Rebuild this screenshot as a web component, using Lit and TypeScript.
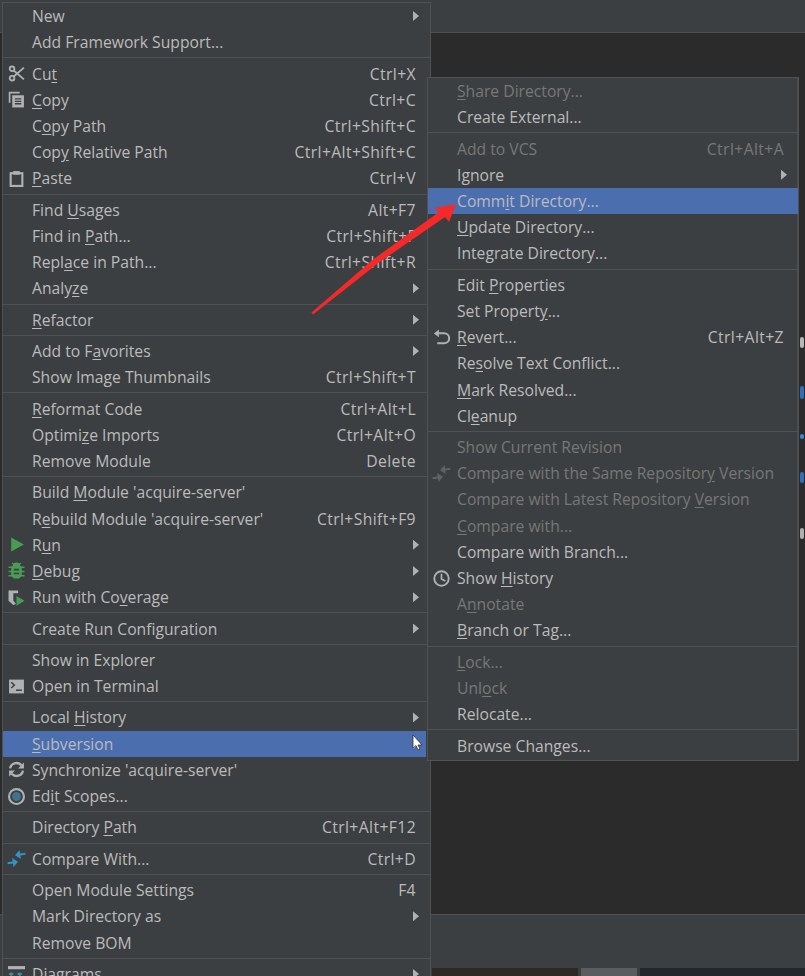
import { LitElement, html, css, svg, nothing } from "lit";
import { customElement } from "lit/decorators.js";

type Item = { t: string; s?: string; sub?: boolean; i?: string; dis?: boolean; sel?: boolean } | null;

const G = "#afb1b3";
const arrows = "M-1 10.3H4V7L9 11.3 4 15.6V12.3H-1zM17 3.7H12V.4L7 4.7 12 9V5.7H17z";
const icons: Record<string, unknown> = {
  cut: svg`<g fill="none" stroke="${G}" stroke-width="1.7"><circle cx="3.8" cy="3.6" r="2.2"/><circle cx="3.8" cy="12.4" r="2.2"/><path d="M5.4 5.2 15 13.5M5.4 10.8 15 2.5"/></g>`,
  copy: svg`<path d="M1.5 1v10M1 1.5h10" fill="none" stroke="${G}" stroke-width="1.6"/><rect x="4" y="4" width="11" height="11.5" fill="${G}"/><path d="M6.5 7.5h6M6.5 9.7h6M6.5 12h6" stroke="#3c3f41" stroke-width="1.2"/>`,
  paste: svg`<rect x="2.5" y="3" width="11" height="12" fill="none" stroke="${G}" stroke-width="2"/><rect x="5" y="1" width="6" height="3.5" fill="${G}"/>`,
  run: svg`<path d="M3 1.5 15 8 3 14.5z" fill="#499c54"/>`,
  debug: svg`<path d="M4.5 3.5A3.5 3 0 0 1 11.5 3.5L13 5V13L10.5 15.5H5.5L3 13V5z" fill="#499c54"/><path d="M0.5 5h15M0.5 9h15M0.5 13h15M4 1l2 2M12 1l-2 2" stroke="#499c54" stroke-width="1.3"/><path d="M5.5 7.2h5M5.5 10.8h5" stroke="#3c3f41" stroke-width="1.5"/>`,
  cover: svg`<path d="M0.5 1.5H9.5V4H5V11L7.5 14 5 15 0.5 11z" fill="${G}"/><path d="M8 6.5 15.5 11 8 15.8z" fill="#499c54"/>`,
  term: svg`<rect x="1" y="1.5" width="14" height="13" fill="${G}"/><path d="M3 4l3 2.7-3 2.7" fill="none" stroke="#3c3f41" stroke-width="1.3"/><path d="M7.5 11.5h5.5" stroke="#3c3f41" stroke-width="1.4"/>`,
  sync: svg`<g fill="none" stroke="${G}" stroke-width="2.2"><path d="M2 7A6 5.6 0 0 1 12.6 4"/><path d="M14 9A6 5.6 0 0 1 3.4 12"/></g><path d="M15 1.5V7H9.5zM1 14.5V9H6.5z" fill="${G}"/>`,
  scope: svg`<circle cx="8" cy="8" r="7" fill="none" stroke="${G}" stroke-width="2"/><circle cx="8" cy="8" r="4.2" fill="#3f7390"/>`,
  compare: svg`<path d="${arrows}" fill="#3592c4" transform="rotate(-8 8 8)"/>`,
  compareDis: svg`<path d="${arrows}" fill="#5f6163" transform="rotate(-8 8 8)"/>`,
  revert: svg`<path d="M4 4H10.5A4.4 4.4 0 0 1 10.5 13.5H4" fill="none" stroke="${G}" stroke-width="1.9"/><path d="M5.5 0.5V7.8L0.8 4.2z" fill="${G}"/>`,
  history: svg`<circle cx="8" cy="8" r="6.8" fill="none" stroke="${G}" stroke-width="1.8"/><path d="M8 3.6V8.4L11.6 10.4" fill="none" stroke="${G}" stroke-width="1.6"/>`,
  diagram: svg`<rect x="0" y="1" width="16" height="3" fill="${G}"/><path d="M3 7V14M1 8.5H5M11 7V14M9 8.5H13" stroke="#3f8a9c" stroke-width="1.8"/>`,
};

const left: Item[] = [
  { t: "New", sub: true }, { t: "Add Framework Support..." }, null,
  { t: "Cu_t", s: "Ctrl+X", i: "cut" }, { t: "_Copy", s: "Ctrl+C", i: "copy" }, { t: "C_opy Path", s: "Ctrl+Shift+C" },
  { t: "Cop_y Relative Path", s: "Ctrl+Alt+Shift+C" }, { t: "_Paste", s: "Ctrl+V", i: "paste" }, null,
  { t: "Find _Usages", s: "Alt+F7" }, { t: "Find in _Path...", s: "Ctrl+Shift+F" }, { t: "Repl_ace in Path...", s: "Ctrl+Shift+R" }, { t: "Analy_ze", sub: true }, null,
  { t: "_Refactor", sub: true }, null,
  { t: "Add to F_avorites", sub: true }, { t: "Show Image Thumbnails", s: "Ctrl+Shift+T" }, null,
  { t: "_Reformat Code", s: "Ctrl+Alt+L" }, { t: "Optimi_ze Imports", s: "Ctrl+Alt+O" }, { t: "Remove Module", s: "Delete" }, null,
  { t: "Build _Module 'acquire-server'" }, { t: "R_ebuild Module 'acquire-server'", s: "Ctrl+Shift+F9" },
  { t: "R_un", sub: true, i: "run" }, { t: "_Debug", sub: true, i: "debug" }, { t: "Run with Co_verage", sub: true, i: "cover" }, null,
  { t: "Create Run Configuration", sub: true }, null,
  { t: "Show in Explorer" }, { t: "Open in Terminal", i: "term" }, null,
  { t: "Local _History", sub: true }, { t: "_Subversion", sub: true, sel: true },
  { t: "Synchronize 'acquire-server'", i: "sync" }, { t: "Ed_it Scopes...", i: "scope" }, null,
  { t: "Directory _Path", s: "Ctrl+Alt+F12" }, null,
  { t: "Compare With...", s: "Ctrl+D", i: "compare" }, null,
  { t: "Open Module Settings", s: "F4" }, { t: "Mark Directory as", sub: true }, { t: "Remove BOM" }, null,
  { t: "Diagrams", sub: true, i: "diagram" },
];

const right: Item[] = [
  { t: "_Share Directory...", dis: true }, { t: "Create External..." }, null,
  { t: "Add to VCS", s: "Ctrl+Alt+A", dis: true }, { t: "Ignore", sub: true }, { t: "Comm_it Directory...", sel: true },
  { t: "_Update Directory..." }, { t: "Integrate Directory..." }, null,
  { t: "Edit _Properties" }, { t: "Set Propert_y..." }, { t: "_Revert...", s: "Ctrl+Alt+Z", i: "revert" },
  { t: "Re_solve Text Conflict..." }, { t: "_Mark Resolved..." }, { t: "Cl_eanup" }, null,
  { t: "Show Current Revision", dis: true }, { t: "Compare with the Same Repositor_y Version", dis: true, i: "compareDis" },
  { t: "Compare with Latest Repository _Version", dis: true }, { t: "_Compare with...", dis: true },
  { t: "Compare with Branch..." }, { t: "Show _History", i: "history" }, { t: "A_nnotate", dis: true }, { t: "_Branch or Tag..." }, null,
  { t: "_Lock...", dis: true }, { t: "Unl_ock", dis: true }, { t: "Relocate..." }, null,
  { t: "Browse Changes..." },
];

// Slivers of editor text that stick out beyond the submenu's right edge.
const slivers = [
  { top: 304, h: 11, c: "#b8b8b8" },
  { top: 353, h: 13, c: "#2f6fc0" },
  { top: 401, h: 5, c: "#3a86d8" },
  { top: 439, h: 11, c: "#2f6fc0" },
  { top: 495, h: 11, c: "#b0b0b0" },
];

function label(t: string) {
  const k = t.indexOf("_");
  if (k < 0) return t;
  return html`${t.slice(0, k)}<u>${t[k + 1]}</u>${t.slice(k + 2)}`;
}

@customElement("app-root")
export class AppRoot extends LitElement {
  static styles = css`
    :host { display: block; position: relative; width: 805px; height: 976px; overflow: hidden; background: #3c3f41;
      font-family: "Open Sans", "Noto Sans", sans-serif; font-size: 15.7px; color: #bbbbbb; }
    .frame { display: flex; flex-direction: column; height: 976px; }
    .topbar { height: 32px; background: #3c3f41; border-bottom: 1px solid #4c4e50; }
    .editor { flex: 1; background: #2b2b2b; position: relative; }
    .panel { height: 53px; background: #3c3f41; border-top: 1px solid #515151; }
    .strip { height: 8px; display: flex; padding-left: 432px; gap: 3px; }
    .s1 { width: 146px; background: #2f2925; }
    .s2 { width: 56px; background: #5a5c5e; }
    .s3 { flex: 1; background: #22272b; }
    .sliver { position: absolute; left: 800px; width: 4px; border-radius: 2px; }
    .menu { position: absolute; background: #3c3f41; border: 1px solid #515151; box-sizing: border-box; }
    .m-left { left: 2px; top: 2px; width: 429px; }
    .m-right { left: 427px; top: 77px; width: 372px; height: 683.6px; box-shadow: inset -2px 0 0 -1px #4a4d4f; }
    .row { height: 26.2px; display: flex; align-items: center; padding: 0 14px 0 4px; white-space: nowrap; line-height: 20px; }
    .row.sel { background: #4b6eaf; }
    .m-left .row.sel { margin-right: 4px; padding-right: 10px; }
    .row.dis { color: #777777; }
    .icon { width: 18px; height: 18px; margin-right: 7px; flex: none; display: flex; align-items: center; justify-content: center; }
    .icon svg { width: 17px; height: 17px; display: block; overflow: visible; }
    .label { flex: 1; }
    .short { flex: none; letter-spacing: 0.4px; }
    .arrow { width: 6px; height: 10px; margin-right: -3px; flex: none; background: #afb1b3; clip-path: polygon(0 0, 100% 50%, 0 100%); }
    .sel .arrow { background: #e6e6e6; }
    .sep { height: 5.2px; display: flex; align-items: center; }
    .sep::before { content: ""; flex: 1; height: 1px; background: #515151; }
    .overlay { position: absolute; left: 0; top: 0; width: 805px; height: 976px; pointer-events: none; }
    .cursor { position: absolute; left: 412px; top: 735px; width: 12px; height: 16px; }
    u { text-underline-offset: 2px; }
  `;

  private renderItems(items: Item[]) {
    return items.map((it) =>
      it === null
        ? html`<div class="sep"></div>`
        : html`<div class="row ${it.sel ? "sel" : ""} ${it.dis ? "dis" : ""}">
            <span class="icon">${it.i ? html`<svg viewBox="0 0 16 16">${icons[it.i]}</svg>` : nothing}</span>
            <span class="label">${label(it.t)}</span>
            ${it.s ? html`<span class="short">${it.s}</span>` : nothing}
            ${it.sub ? html`<span class="arrow"></span>` : nothing}
          </div>`
    );
  }

  render() {
    return html`
      <div class="frame">
        <div class="topbar"></div>
        <div class="editor">
          ${slivers.map((s) => html`<span class="sliver" style="top:${s.top}px;height:${s.h}px;background:${s.c}"></span>`)}
        </div>
        <div class="panel"></div>
        <div class="strip"><div class="s1"></div><div class="s2"></div><div class="s3"></div></div>
      </div>
      <div class="menu m-left">${this.renderItems(left)}</div>
      <div class="menu m-right">${this.renderItems(right)}</div>
      <svg class="cursor" viewBox="0 0 12 16"><path d="M1 0V13L4 10.5 6 15 8 14 6 10H10z" fill="#fff" stroke="#222" stroke-width=".7"/></svg>
      <svg class="overlay" viewBox="0 0 805 976">
        <path d="M311.5 312.5 313 314.5 379 262.5 445 217 449 222 456 204 434 208 439 212 373 259.5z" fill="#f5292a"/>
      </svg>
    `;
  }
}
